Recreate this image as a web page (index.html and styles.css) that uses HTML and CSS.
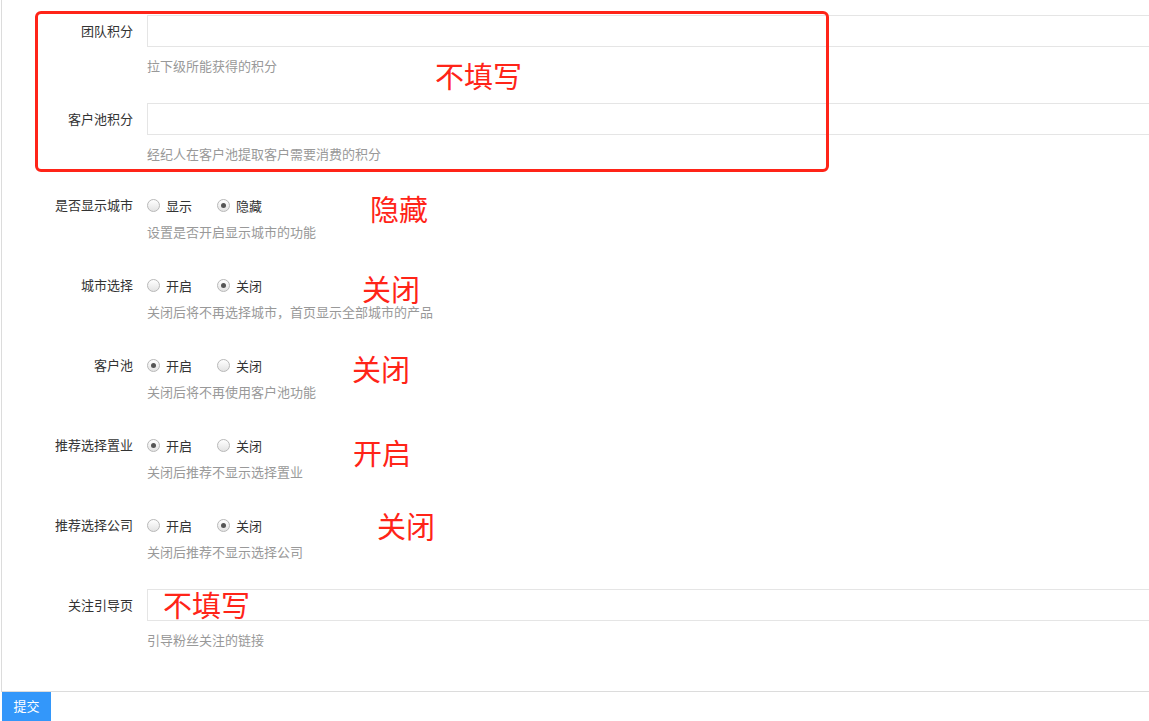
FILE: index.html
```html
<!DOCTYPE html>
<html lang="zh-CN">
<head>
<meta charset="utf-8">
<title>设置</title>
<link rel="stylesheet" href="styles.css">
</head>
<body>
<div class="page">
  <form class="panel">
    <div class="group">
      <label class="label">团队积分</label>
      <div class="control">
        <input class="input" type="text">
        <p class="help">拉下级所能获得的积分</p>
      </div>
    </div>
    <div class="group group-tight">
      <label class="label">客户池积分</label>
      <div class="control">
        <input class="input" type="text">
        <p class="help">经纪人在客户池提取客户需要消费的积分</p>
      </div>
    </div>
    <div class="group">
      <label class="label">是否显示城市</label>
      <div class="control">
        <div class="radios">
          <span class="opt"><i class="radio"></i>显示</span>
          <span class="opt"><i class="radio on"></i>隐藏</span>
        </div>
        <p class="help help-r">设置是否开启显示城市的功能</p>
      </div>
    </div>
    <div class="group">
      <label class="label">城市选择</label>
      <div class="control">
        <div class="radios">
          <span class="opt"><i class="radio"></i>开启</span>
          <span class="opt"><i class="radio on"></i>关闭</span>
        </div>
        <p class="help help-r">关闭后将不再选择城市，首页显示全部城市的产品</p>
      </div>
    </div>
    <div class="group">
      <label class="label">客户池</label>
      <div class="control">
        <div class="radios">
          <span class="opt"><i class="radio on"></i>开启</span>
          <span class="opt"><i class="radio"></i>关闭</span>
        </div>
        <p class="help help-r">关闭后将不再使用客户池功能</p>
      </div>
    </div>
    <div class="group">
      <label class="label">推荐选择置业</label>
      <div class="control">
        <div class="radios">
          <span class="opt"><i class="radio on"></i>开启</span>
          <span class="opt"><i class="radio"></i>关闭</span>
        </div>
        <p class="help help-r">关闭后推荐不显示选择置业</p>
      </div>
    </div>
    <div class="group">
      <label class="label">推荐选择公司</label>
      <div class="control">
        <div class="radios">
          <span class="opt"><i class="radio"></i>开启</span>
          <span class="opt"><i class="radio on"></i>关闭</span>
        </div>
        <p class="help help-r">关闭后推荐不显示选择公司</p>
      </div>
    </div>
    <div class="group">
      <label class="label">关注引导页</label>
      <div class="control">
        <input class="input" type="text">
        <p class="help">引导粉丝关注的链接</p>
      </div>
    </div>
  </form>
  <button class="submit" type="button">提交</button>

  <div class="mark-box"></div>
  <span class="note n1">不填写</span>
  <span class="note n2">隐藏</span>
  <span class="note n3">关闭</span>
  <span class="note n4">关闭</span>
  <span class="note n5">开启</span>
  <span class="note n6">关闭</span>
  <span class="note n7">不填写</span>
</div>
</body>
</html>
```

FILE: styles.css
```css
html, body {
  margin: 0;
  padding: 0;
  background: #fff;
  overflow: hidden;
}
body {
  font-family: "Noto Sans CJK SC", "Microsoft YaHei", sans-serif;
  font-size: 13px;
  color: #333;
}
.page {
  position: relative;
  width: 1300px;
  height: 721px;
}
.panel {
  margin: 0 0 0 1px;
  padding: 15px 0 14px 0;
  border-left: 1px solid #dcdcdc;
  border-bottom: 1px solid #dcdcdc;
}
.group {
  display: grid;
  grid-template-columns: 131px 1fr;
  column-gap: 14px;
  margin-bottom: 28px;
}
.group-tight {
  margin-bottom: 26px;
}
.label {
  text-align: right;
  line-height: 32px;
  height: 32px;
  color: #333;
  white-space: nowrap;
}
.control {
  min-width: 0;
}
.input {
  display: block;
  box-sizing: border-box;
  width: 1100px;
  height: 32px;
  margin: 0;
  border: 1px solid #e5e5e5;
  background: #fff;
  outline: none;
  padding: 0 10px;
}
.help {
  margin: 10px 0 0 0;
  line-height: 18px;
  color: #999;
  white-space: nowrap;
}
.help-r {
  margin-top: 2px;
}
.radios {
  display: flex;
  align-items: center;
  height: 32px;
}
.opt {
  display: inline-flex;
  align-items: center;
  width: 70px;
  color: #333;
}
.radio {
  box-sizing: border-box;
  width: 13px;
  height: 13px;
  margin-right: 6px;
  border-radius: 50%;
  border: 1px solid #b8b8b8;
  background: linear-gradient(#ffffff, #e3e3e3);
  position: relative;
  flex: none;
}
.radio.on::after {
  content: "";
  position: absolute;
  left: 3px;
  top: 3px;
  width: 5px;
  height: 5px;
  border-radius: 50%;
  background: #555;
}
.submit {
  display: block;
  margin: 0 0 0 2px;
  width: 49px;
  height: 32px;
  border: 0;
  border-radius: 0;
  background: #3397fa;
  color: #fff;
  font-family: "Noto Sans CJK SC", sans-serif;
  font-size: 13px;
  padding: 0 0 4px 0;
  line-height: 26px;
}
.mark-box {
  position: absolute;
  left: 35px;
  top: 11px;
  width: 794px;
  height: 161px;
  box-sizing: border-box;
  border: 3px solid #ff2418;
  border-radius: 6px;
}
.note {
  position: absolute;
  font-size: 29px;
  line-height: 26px;
  color: #ff2418;
  white-space: nowrap;
}
.n1 { left: 435px; top: 62px; }
.n2 { left: 370px; top: 195px; }
.n3 { left: 362px; top: 275px; }
.n4 { left: 352px; top: 355px; }
.n5 { left: 353px; top: 439px; }
.n6 { left: 377px; top: 512px; }
.n7 { left: 163px; top: 591px; }
```
